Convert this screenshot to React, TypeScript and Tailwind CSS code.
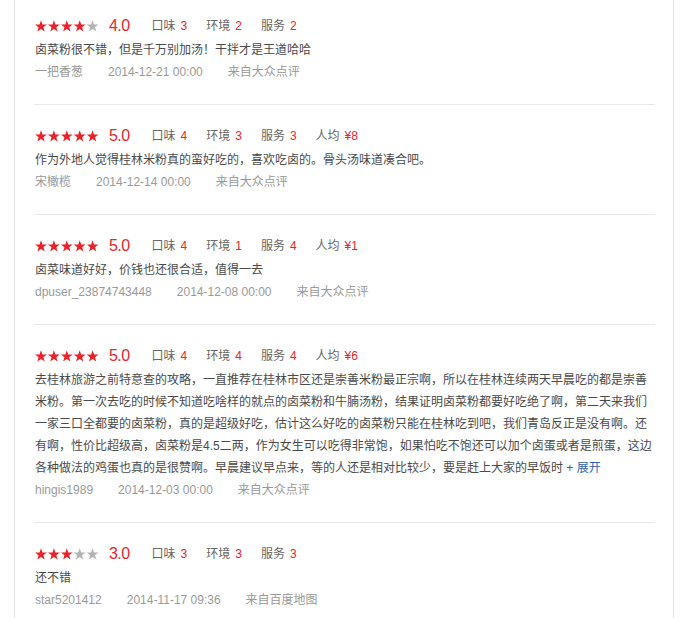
import React from "react";

type Review = {
  stars: number;
  taste: number;
  env: number;
  service: number;
  price?: string;
  text: string;
  more?: boolean;
  user: string;
  date: string;
  source: string;
};

const reviews: Review[] = [
  {
    stars: 4,
    taste: 3,
    env: 2,
    service: 2,
    text: "卤菜粉很不错，但是千万别加汤！干拌才是王道哈哈",
    user: "一把香葱",
    date: "2014-12-21 00:00",
    source: "来自大众点评",
  },
  {
    stars: 5,
    taste: 4,
    env: 3,
    service: 3,
    price: "¥8",
    text: "作为外地人觉得桂林米粉真的蛮好吃的，喜欢吃卤的。骨头汤味道凑合吧。",
    user: "宋橄榄",
    date: "2014-12-14 00:00",
    source: "来自大众点评",
  },
  {
    stars: 5,
    taste: 4,
    env: 1,
    service: 4,
    price: "¥1",
    text: "卤菜味道好好，价钱也还很合适，值得一去",
    user: "dpuser_23874743448",
    date: "2014-12-08 00:00",
    source: "来自大众点评",
  },
  {
    stars: 5,
    taste: 4,
    env: 4,
    service: 4,
    price: "¥6",
    text: "去桂林旅游之前特意查的攻略，一直推荐在桂林市区还是崇善米粉最正宗啊，所以在桂林连续两天早晨吃的都是崇善米粉。第一次去吃的时候不知道吃啥样的就点的卤菜粉和牛腩汤粉，结果证明卤菜粉都要好吃绝了啊，第二天来我们一家三口全都要的卤菜粉，真的是超级好吃，估计这么好吃的卤菜粉只能在桂林吃到吧，我们青岛反正是没有啊。还有啊，性价比超级高，卤菜粉是4.5二两，作为女生可以吃得非常饱，如果怕吃不饱还可以加个卤蛋或者是煎蛋，这边各种做法的鸡蛋也真的是很赞啊。早晨建议早点来，等的人还是相对比较少，要是赶上大家的早饭时",
    more: true,
    user: "hingis1989",
    date: "2014-12-03 00:00",
    source: "来自大众点评",
  },
  {
    stars: 3,
    taste: 3,
    env: 3,
    service: 3,
    text: "还不错",
    user: "star5201412",
    date: "2014-11-17 09:36",
    source: "来自百度地图",
  },
];

const STAR =
  "M6 0.3L7.47 4.48L11.9 4.58L8.38 7.27L9.65 11.52L6 9L2.35 11.52L3.62 7.27L0.1 4.58L4.53 4.48Z";

function Stars({ n }: { n: number }) {
  return (
    <svg width="64" height="12" viewBox="0 0 64 12" className="block">
      {[0, 1, 2, 3, 4].map((i) => (
        <path
          key={i}
          d={STAR}
          transform={`translate(${i * 12.9} 0)`}
          fill={i < n ? "#e8232a" : "#b3b3b3"}
        />
      ))}
    </svg>
  );
}

function Score({ label, value }: { label: string; value: string | number }) {
  return (
    <span className="mr-[19px] text-[#666]">
      {label}
      <span className="ml-[5px] text-[#e4262d]">{value}</span>
    </span>
  );
}

function ReviewItem({ r, first }: { r: Review; first: boolean }) {
  return (
    <div
      className={`ml-[19px] mr-[18px] border-b border-[#e8e8e8] pl-px pb-[21px] ${
        first ? "pt-[13px]" : "pt-[18px]"
      }`}
    >
      <div className="flex h-[26px] items-center text-[12px]">
        <Stars n={r.stars} />
        <span className="ml-[10px] mr-[22px] text-[16px] leading-none tracking-[-0.6px] text-[#e4262d]">
          {r.stars}.0
        </span>
        <Score label="口味" value={r.taste} />
        <Score label="环境" value={r.env} />
        <Score label="服务" value={r.service} />
        {r.price && <Score label="人均" value={r.price} />}
      </div>
      <p className="w-[620px] text-[12px] leading-[22px] text-[#4a4a4a]">
        {r.text}
        {r.more && <span className="text-[#2f5fae]"> + 展开</span>}
      </p>
      <div className="flex text-[12px] leading-[22px] text-[#999]">
        <span className="mr-[25px]">{r.user}</span>
        <span className="mr-[25px]">{r.date}</span>
        <span>{r.source}</span>
      </div>
    </div>
  );
}

export default function App() {
  return (
    <div
      className="h-[618px] w-[688px] overflow-hidden bg-white"
      style={{ fontFamily: '"Liberation Sans", "Noto Sans CJK SC", sans-serif' }}
    >
      <div className="ml-[14px] h-full w-[660px] border-x border-[#e3e3e3]">
        {reviews.map((r, i) => (
          <ReviewItem key={i} r={r} first={i === 0} />
        ))}
      </div>
    </div>
  );
}
